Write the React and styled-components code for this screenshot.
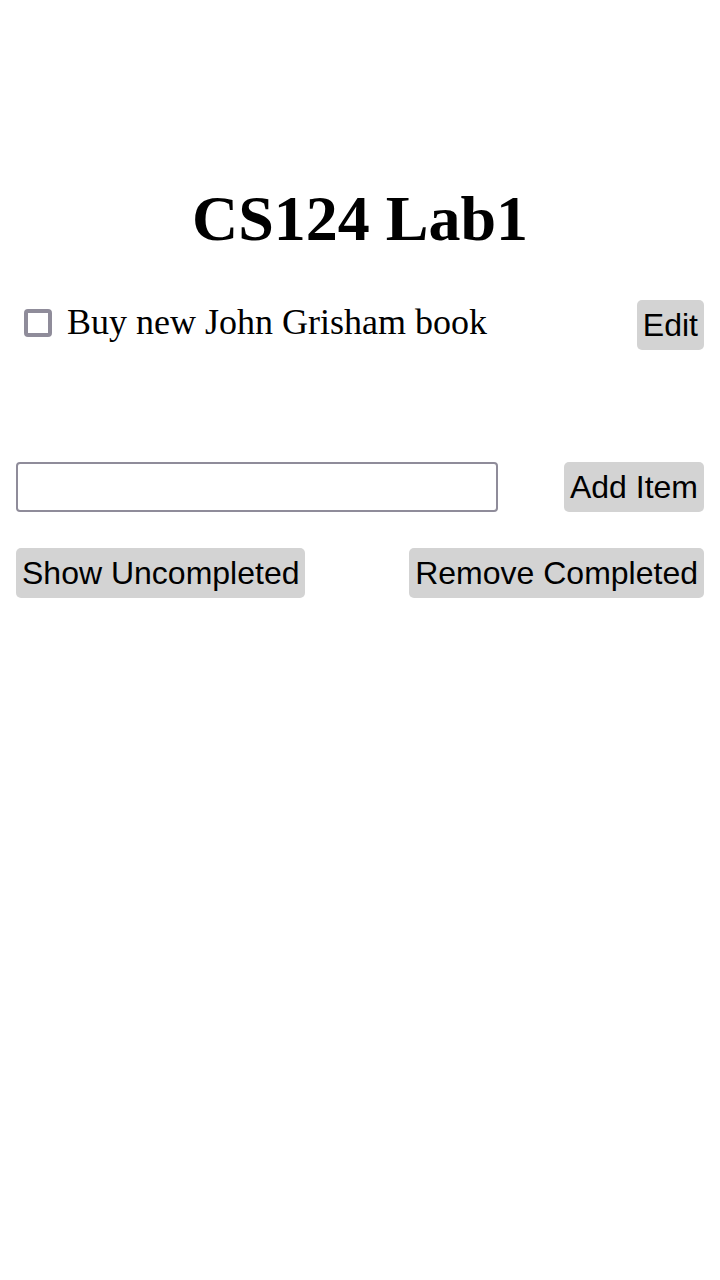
import React, { useState } from 'react';
import styled, { createGlobalStyle } from 'styled-components';

const GlobalStyle = createGlobalStyle`
  body {
    margin: 0;
    background: #fff;
    font-family: "Liberation Serif", "Times New Roman", serif;
  }
`;

const Page = styled.div`
  padding: 0 16px;
`;

const Title = styled.h1`
  margin: 0;
  padding-top: 182px;
  text-align: center;
  font-size: 64px;
  font-weight: bold;
  line-height: 74px;
`;

const ItemRow = styled.div`
  display: flex;
  align-items: flex-start;
  margin-top: 44px;
  height: 50px;
`;

const Check = styled.span`
  box-sizing: border-box;
  width: 28px;
  height: 28px;
  margin: 9px 15px 0 8px;
  border: 4px solid #8f8c9a;
  border-radius: 4px;
  background: #fff;
`;

const ItemText = styled.span`
  flex: 1;
  font-size: 36px;
  line-height: 44px;
`;

const Button = styled.button`
  font-family: "Liberation Sans", Arial, sans-serif;
  font-size: 32px;
  line-height: 38px;
  height: 50px;
  padding: 6px 6px;
  border: none;
  border-radius: 5px;
  background: #d3d3d3;
  color: #000;
`;

const AddRow = styled.div`
  display: flex;
  justify-content: space-between;
  margin-top: 112px;
`;

const TextInput = styled.input`
  box-sizing: border-box;
  width: 482px;
  height: 50px;
  border: 2px solid #8f8c9a;
  border-radius: 4px;
  font-size: 28px;
`;

const ActionRow = styled.div`
  display: flex;
  justify-content: space-between;
  margin-top: 36px;
`;

export default function App() {
  const [text, setText] = useState('');
  return (
    <>
      <GlobalStyle />
      <Page>
        <Title>CS124 Lab1</Title>
        <ItemRow>
          <Check />
          <ItemText>Buy new John Grisham book</ItemText>
          <Button>Edit</Button>
        </ItemRow>
        <AddRow>
          <TextInput value={text} onChange={e => setText(e.target.value)} />
          <Button>Add Item</Button>
        </AddRow>
        <ActionRow>
          <Button>Show Uncompleted</Button>
          <Button>Remove Completed</Button>
        </ActionRow>
      </Page>
    </>
  );
}
